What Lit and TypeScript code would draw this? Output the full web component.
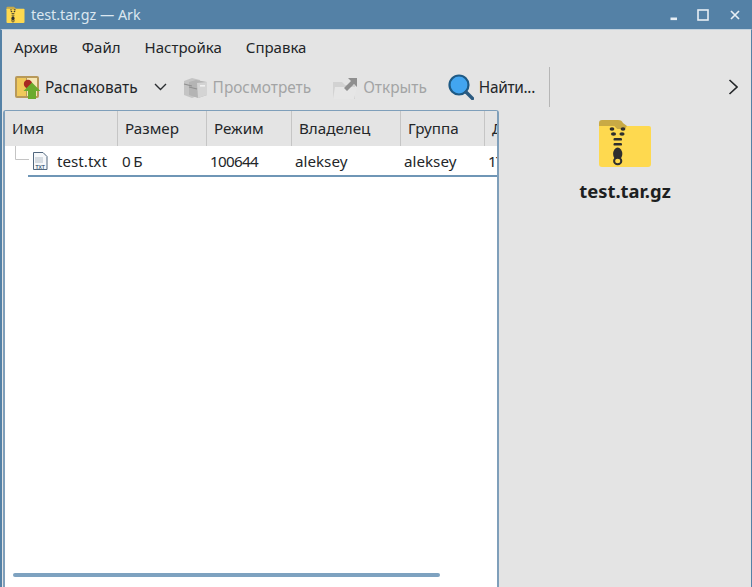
import { LitElement, html, css } from 'lit';
import { customElement } from 'lit/decorators.js';

const columns = [
  { name: 'Имя', width: 113 },
  { name: 'Размер', width: 89 },
  { name: 'Режим', width: 85 },
  { name: 'Владелец', width: 109 },
  { name: 'Группа', width: 84 },
  { name: 'Дата', width: 60 },
];

@customElement('app-root')
export class AppRoot extends LitElement {
  static get styles() {
    return css`
      :host {
        display: flex;
        flex-direction: column;
        width: 752px;
        height: 587px;
        overflow: hidden;
        background: #e4e4e4;
        color: #232629;
        font-family: 'Noto Sans', sans-serif;
        font-size: 15.2px;
      }

      svg {
        display: block;
        flex: none;
      }

      .titlebar {
        display: flex;
        align-items: center;
        flex: none;
        height: 29px;
        padding: 0 11px 0 6px;
        background: #5481a6;
        color: #dbe7f0;
      }

      .title {
        margin-left: 6px;
        font-size: 14.3px;
      }

      .window-buttons {
        display: flex;
        align-items: center;
        gap: 20px;
        margin-left: auto;
      }

      .window {
        display: flex;
        flex: 1;
        flex-direction: column;
        min-height: 0;
        border-left: 2px solid #5481a6;
        border-right: 1px solid #5481a6;
        border-top: 1px solid #c3d2de;
      }

      .menubar {
        display: flex;
        gap: 24px;
        flex: none;
        height: 34px;
        padding: 0 12px;
        align-items: center;
        font-size: 15px;
      }

      .toolbar {
        display: flex;
        align-items: center;
        flex: none;
        height: 46px;
        padding-left: 13px;
        font-size: 15.4px;
      }

      .tool {
        display: flex;
        align-items: center;
        gap: 5px;
      }

      .extract-tool {
        gap: 4px;
      }

      .disabled {
        color: #a3a4a5;
      }

      .chevron-down {
        margin: 0 16px;
      }

      .view-tool {
        margin-right: 22px;
      }

      .open-tool {
        margin-right: 21px;
      }

      .find-label {
        letter-spacing: -0.3px;
      }

      .separator {
        width: 1px;
        height: 40px;
        margin-left: 14px;
        background: #b6b6b6;
      }

      .more {
        margin-left: auto;
        margin-right: 13px;
      }

      .content {
        display: flex;
        flex: 1;
        min-height: 0;
      }

      .tree {
        display: flex;
        flex-direction: column;
        flex: none;
        box-sizing: border-box;
        width: 496px;
        margin-left: 1px;
        background: #fff;
        border: 1px solid #7f9fba;
        border-width: 1px 2px 0 2px;
        border-radius: 3px 3px 0 0;
        overflow: hidden;
      }

      .header {
        display: flex;
        flex: none;
        height: 35px;
        background: #e4e4e4;
      }

      .header-cell {
        box-sizing: border-box;
        flex: none;
        height: 35px;
        line-height: 35px;
        padding-left: 7px;
        border-right: 1px solid #c5c5c5;
        white-space: nowrap;
        overflow: hidden;
      }

      .row {
        display: flex;
        flex: none;
        height: 29px;
      }

      .name-cell {
        display: flex;
        align-items: center;
        flex: none;
        width: 113px;
        box-sizing: border-box;
        padding-left: 10px;
      }

      .file-name {
        margin: 1px 0 0 9px;
      }

      .file-label {
        font-family: 'Liberation Sans', sans-serif;
        font-size: 5px;
        font-weight: 700;
        fill: #4c6580;
      }

      .cell {
        flex: none;
        box-sizing: border-box;
        height: 29px;
        line-height: 31px;
        padding-left: 3px;
        white-space: nowrap;
        overflow: hidden;
      }

      .num {
        letter-spacing: -0.7px;
      }

      .size {
        padding-left: 4px;
      }

      .date {
        letter-spacing: -1.2px;
      }

      .row-line {
        flex: none;
        height: 1.5px;
        margin-left: 23px;
        background: #6f96b6;
      }

      .spacer {
        flex: 1;
      }

      .scrollbar {
        flex: none;
        width: 427px;
        height: 4px;
        margin: 0 0 10px 8px;
        border-radius: 2px;
        background: #7ea2c0;
      }

      .details {
        display: flex;
        flex: 1;
        flex-direction: column;
        align-items: center;
        padding-top: 8px;
      }

      .archive-name {
        margin-top: 8px;
        font-size: 18.4px;
        line-height: 25px;
        font-weight: 700;
        color: #1d1f21;
      }
    `;
  }

  private renderZip(width: number, height: number) {
    return html`
      <svg width=${width} height=${height} viewBox="0 0 54 52">
        <path d="M1 11a3 3 0 0 1 3-3h47a2 2 0 0 1 2 2v36a3 3 0 0 1-3 3H4a3 3 0 0 1-3-3z" fill="#fed94f" />
        <path d="M1 8V5a3 3 0 0 1 3-3h16c3 0 4 1 5 3l4 3 -2 3H19l-3 -3z" fill="#c9aa45" />
        <path d="M1 8h15l3 3H1z" fill="#fed94f" />
        <g fill="#2f2f2f">
          <ellipse cx="14" cy="11" rx="2.4" ry="1.8" />
          <ellipse cx="25" cy="11" rx="2.4" ry="1.8" />
          <ellipse cx="15.5" cy="16" rx="2.6" ry="1.8" />
          <ellipse cx="24" cy="16" rx="2.6" ry="1.8" />
          <rect x="15.5" y="20" width="8.5" height="2.6" rx="1.2" />
          <rect x="15.5" y="25" width="8.5" height="2.6" rx="1.2" />
          <ellipse cx="19.7" cy="36" rx="4.6" ry="6.5" />
        </g>
        <ellipse cx="19.7" cy="43" rx="3.6" ry="3.2" fill="#fed94f" stroke="#2f2f2f" stroke-width="2" />
      </svg>
    `;
  }

  render() {
    return html`
      <div class="titlebar">
        ${this.renderZip(19, 18)}
        <span class="title">test.tar.gz — Ark</span>
        <div class="window-buttons">
          <svg width="8" height="16" viewBox="0 0 8 16">
            <rect x="1.5" y="10.5" width="6.5" height="2.6" fill="#e6eef4" />
          </svg>
          <svg width="12" height="12" viewBox="0 0 12 12">
            <rect x="1" y="1" width="10" height="10" fill="none" stroke="#e6eef4" stroke-width="1.6" />
          </svg>
          <svg width="12" height="12" viewBox="0 0 12 12">
            <path d="M2 2l8 8M10 2l-8 8" stroke="#e6eef4" stroke-width="1.7" />
          </svg>
        </div>
      </div>
      <div class="window">
        <div class="menubar">
          <span>Архив</span>
          <span>Файл</span>
          <span>Настройка</span>
          <span>Справка</span>
        </div>
        <div class="toolbar">
          <div class="tool extract-tool">
            <svg width="26" height="26" viewBox="0 0 26 26">
              <path d="M0 4a2 2 0 0 1 2-2h20a2 2 0 0 1 2 2v18a2 2 0 0 1-2 2H2a2 2 0 0 1-2-2z" fill="#b8995a" />
              <rect x="2" y="4" width="9" height="18" fill="#f0c95a" />
              <rect x="12" y="4" width="10" height="18" fill="#f6e7b4" />
              <circle cx="13" cy="10" r="4.2" fill="#a82a22" />
              <path d="M17 8.5l8.5 8.5H21v8h-8v-8H8.5z" fill="#6bab2e" />
            </svg>
            <span>Распаковать</span>
          </div>
          <svg class="chevron-down" width="13" height="8" viewBox="0 0 13 8">
            <path d="M1 1l5.5 5.5L12 1" fill="none" stroke="#2b2e31" stroke-width="1.4" />
          </svg>
          <div class="tool disabled view-tool">
            <svg width="25" height="25" viewBox="0 0 25 25">
              <path d="M1 6l8-3 8 2v15l-8 3-8-3z" fill="#c4c4c4" />
              <path d="M6 7l7-2 11 2v13l-9 3-9-3z" fill="#b4b4b4" />
              <path d="M14 8l10-1v13l-9 3z" fill="#d4d4d4" />
              <path d="M1 9l8 2M6 12l8 2" stroke="#8f8f8f" stroke-width="1.2" />
              <rect x="17" y="10" width="5" height="1.6" fill="#f0f0f0" />
            </svg>
            <span>Просмотреть</span>
          </div>
          <div class="tool disabled open-tool">
            <svg width="25" height="25" viewBox="0 0 25 25">
              <path d="M0 7h9l3 3h10v14H0z" fill="#d2d2d2" />
              <path d="M2 12h22l-3 12H0z" fill="#e6e6e6" />
              <path d="M11 13l7-7-3-3h9v9l-3-3-7 7z" fill="#8f8f8f" />
            </svg>
            <span>Открыть</span>
          </div>
          <div class="tool">
            <svg width="26" height="26" viewBox="0 0 26 26">
              <circle cx="11" cy="11" r="9.5" fill="#42a5f0" stroke="#1e5a85" stroke-width="2.2" />
              <path d="M18 18l6.5 6.5" stroke="#2b5a80" stroke-width="3.4" stroke-linecap="round" />
            </svg>
            <span class="find-label">Найти...</span>
          </div>
          <div class="separator"></div>
          <svg class="more" width="10" height="16" viewBox="0 0 10 16">
            <path d="M1.5 1L9 8l-7.5 7" fill="none" stroke="#232629" stroke-width="1.6" />
          </svg>
        </div>
        <div class="content">
          <div class="tree">
            <div class="header">
              ${columns.map(
                (c) => html`<div class="header-cell" style="width: ${c.width}px">${c.name}</div>`
              )}
            </div>
            <div class="row">
              <div class="name-cell">
                <svg width="33" height="29" viewBox="0 0 33 29">
                  <path d="M0.5 0v13.5H14" fill="none" stroke="#c4c4c4" />
                  <path d="M18.5 6.5h9.5l4 4v13H18.5z" fill="#f6f8fa" stroke="#51677e" />
                  <rect x="20" y="11" width="8" height="6" fill="#d5dbe1" />
                  <text class="file-label" x="25.2" y="22.5" text-anchor="middle">TXT</text>
                </svg>
                <span class="file-name">test.txt</span>
              </div>
              <div class="cell num size" style="width: 89px">0 Б</div>
              <div class="cell num" style="width: 85px">100644</div>
              <div class="cell" style="width: 109px">aleksey</div>
              <div class="cell" style="width: 84px">aleksey</div>
              <div class="cell date" style="width: 12px">17</div>
            </div>
            <div class="row-line"></div>
            <div class="spacer"></div>
            <div class="scrollbar"></div>
          </div>
          <div class="details">
            ${this.renderZip(54, 52)}
            <span class="archive-name">test.tar.gz</span>
          </div>
        </div>
      </div>
    `;
  }
}
